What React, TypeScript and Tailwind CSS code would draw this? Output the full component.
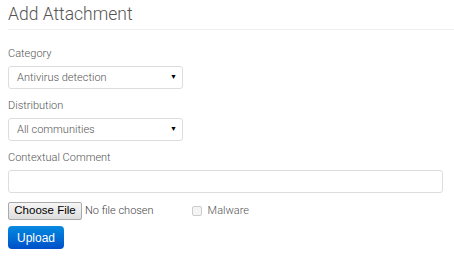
import React from "react";

export default function App() {
  return (
    <div className="w-[454px] h-[271px] bg-white overflow-hidden pl-2 text-[#555]" style={{ fontFamily: "Roboto, 'Liberation Sans', sans-serif" }}>
      <h1 className="text-[17.5px] font-light leading-[20px] pt-[4px] text-[#555]">Add Attachment</h1>
      <div className="mt-[5px] h-px bg-[#eee]" />
      <div className="mt-[17px] text-[11px] font-light leading-[14px]">Category</div>
      <div className="mt-[5px] w-[175px] h-[23px] border border-[#ddd] rounded-[3px] flex items-center justify-between pl-[8px] pr-[5px] text-[11px] font-light">
        <span className="pt-px">Antivirus detection</span>
        <span className="text-[7px] text-black">▼</span>
      </div>
      <div className="mt-[10px] text-[11px] font-light leading-[14px]">Distribution</div>
      <div className="mt-[5px] w-[175px] h-[23px] border border-[#ddd] rounded-[3px] flex items-center justify-between pl-[8px] pr-[5px] text-[11px] font-light">
        <span className="pt-px">All communities</span>
        <span className="text-[7px] text-black">▼</span>
      </div>
      <div className="mt-[10px] text-[11px] font-light leading-[14px]">Contextual Comment</div>
      <div className="mt-[5px] w-[435px] h-[23px] border border-[#ddd] rounded-[3px]" />
      <div className="mt-[9px] flex items-center h-[18px]">
        <div className="h-[18px] w-[74px] border border-[#a9a9a9] rounded-[2px] bg-gradient-to-b from-[#f6f6f6] to-[#dedede] text-[11.5px] text-black flex items-center justify-center" style={{ fontFamily: "'Liberation Sans', Arial, sans-serif" }}>Choose File</div>
        <span className="ml-[3px] text-[11px] font-light text-[#444]">No file chosen</span>
        <div className="ml-[38px] w-[10px] h-[10px] border border-[#ccc] rounded-[2px] bg-[#f4f4f4]" />
        <span className="ml-[6px] text-[11px] font-light">Malware</span>
      </div>
      <div className="mt-[6px] w-[56px] h-[23px] rounded-[4px] bg-gradient-to-b from-[#0a8ae0] to-[#0050c8] text-white text-[12px] flex items-center justify-center" style={{ fontFamily: "'Liberation Sans', Arial, sans-serif" }}>Upload</div>
    </div>
  );
}
